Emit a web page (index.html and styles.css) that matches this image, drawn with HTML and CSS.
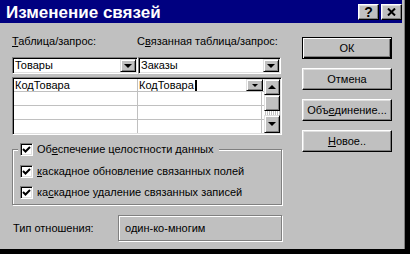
FILE: index.html
```html
<!DOCTYPE html>
<html lang="ru">
<head>
    <meta charset="UTF-8">
    <title>Изменение связей</title>
    <link rel="stylesheet" href="styles.css">
</head>
<body>
<div class="window">
    <div class="titlebar">
        <span class="title">Изменение связей</span>
        <div class="title-buttons">
            <button class="tbtn">?</button>
            <button class="tbtn">
                <svg width="9" height="8" viewBox="0 0 9 8"><path d="M1 0.5 L8 7.5 M8 0.5 L1 7.5" stroke="#000" stroke-width="2"/></svg>
            </button>
        </div>
    </div>

    <div class="content">
        <div class="main">
            <div class="labels">
                <span class="label-left"><u>Т</u>аблица/запрос:</span>
                <span>С<u>в</u>язанная таблица/запрос:</span>
            </div>

            <div class="combos">
                <div class="combo combo-left">
                    <span class="combo-text">Товары</span>
                    <span class="drop"><i class="arrow-down"></i></span>
                </div>
                <div class="combo combo-right">
                    <span class="combo-text">Заказы</span>
                    <span class="drop"><i class="arrow-down"></i></span>
                </div>
            </div>

            <div class="grid">
                <div class="cells">
                    <div class="row">
                        <div class="cell">КодТовара</div>
                        <div class="cell cell-active">КодТовара<span class="caret"></span><span class="cell-drop"><i class="arrow-down small"></i></span></div>
                    </div>
                    <div class="row"><div class="cell"></div><div class="cell"></div></div>
                    <div class="row"><div class="cell"></div><div class="cell"></div></div>
                    <div class="row"><div class="cell"></div><div class="cell"></div></div>
                </div>
                <div class="scrollbar">
                    <div class="sb-btn"><i class="arrow-up"></i></div>
                    <div class="sb-thumb"></div>
                    <div class="sb-track"></div>
                    <div class="sb-btn sb-down"><i class="arrow-down"></i></div>
                </div>
            </div>

            <fieldset class="group">
                <legend>
                    <span class="check">
                        <span class="box"><svg width="9" height="9" viewBox="0 0 9 9"><path d="M1 4 L3.5 6.5 L8 2" fill="none" stroke="#000" stroke-width="2"/></svg></span>
                        <span>Об<u>е</u>спечение целостности данных</span>
                    </span>
                </legend>
                <div class="checks">
                    <span class="check">
                        <span class="box"><svg width="9" height="9" viewBox="0 0 9 9"><path d="M1 4 L3.5 6.5 L8 2" fill="none" stroke="#000" stroke-width="2"/></svg></span>
                        <span><u>к</u>аскадное обновление связанных полей</span>
                    </span>
                    <span class="check">
                        <span class="box"><svg width="9" height="9" viewBox="0 0 9 9"><path d="M1 4 L3.5 6.5 L8 2" fill="none" stroke="#000" stroke-width="2"/></svg></span>
                        <span>ка<u>с</u>кадное удаление связанных записей</span>
                    </span>
                </div>
            </fieldset>

            <div class="relation">
                <span>Тип отношения:</span>
                <div class="relation-box">один-ко-многим</div>
            </div>
        </div>

        <div class="actions">
            <button class="btn btn-default">ОК</button>
            <button class="btn">Отмена</button>
            <button class="btn">Объ<u>е</u>динение...</button>
            <button class="btn"><u>Н</u>овое..</button>
        </div>
    </div>
</div>
</body>
</html>
```

FILE: styles.css
```css
* {
    box-sizing: border-box;
}

body {
    margin: 0;
    background: #000;
    font-family: "Liberation Sans", Arial, sans-serif;
    font-size: 11px;
    color: #000;
}

.window {
    width: 405px;
    height: 249px;
    background: #c0c0c0;
    padding-right: 2px;
    border-right: 1px solid #808080;
    overflow: hidden;
}

/* title bar */
.titlebar {
    height: 23px;
    display: flex;
    background: #000080;
    color: #fff;
    padding-left: 6px;
}

.title {
    font-size: 17px;
    font-weight: bold;
    line-height: 23px;
    padding-top: 1px;
}

.title-buttons {
    display: flex;
    gap: 2px;
    margin-left: auto;
    margin-top: 4px;
    height: 16px;
}

.tbtn {
    width: 21px;
    height: 16px;
    padding: 0;
    background: #c0c0c0;
    border: 1px solid;
    border-color: #fff #000 #000 #fff;
    box-shadow: inset -1px -1px #808080, inset 1px 1px #dfdfdf;
    display: flex;
    align-items: center;
    justify-content: center;
    font-family: "Liberation Sans", Arial, sans-serif;
    font-size: 14px;
    font-weight: bold;
    line-height: 1;
    color: #000;
}

/* dialog body */
.content {
    display: flex;
    padding: 12px 0 0 12px;
}

.main {
    width: 270px;
}

.labels {
    display: flex;
    line-height: 13px;
    height: 13px;
}

.label-left {
    width: 125px;
}

.combos {
    display: flex;
    margin-top: 9px;
}

.combo {
    height: 17px;
    display: flex;
    background: #fff;
    border: 1px solid;
    border-color: #808080 #fff #fff #808080;
    box-shadow: inset 1px 1px #000, inset -1px -1px #dfdfdf;
    padding: 1px;
}

.combo-left {
    width: 126px;
}

.combo-right {
    width: 143px;
}

.combo-text {
    flex: 1;
    line-height: 13px;
    padding-left: 1px;
}

.drop,
.cell-drop,
.sb-btn,
.sb-thumb {
    background: #c0c0c0;
    border: 1px solid;
    border-color: #dfdfdf #000 #000 #dfdfdf;
    box-shadow: inset 1px 1px #fff, inset -1px -1px #808080;
    display: flex;
    align-items: center;
    justify-content: center;
}

.drop {
    width: 16px;
    height: 13px;
}

.arrow-down,
.arrow-up {
    width: 0;
    height: 0;
    border-left: 4px solid transparent;
    border-right: 4px solid transparent;
}

.arrow-down {
    border-top: 4px solid #000;
}

.arrow-up {
    border-bottom: 4px solid #000;
}

.arrow-down.small {
    border-left-width: 3px;
    border-right-width: 3px;
    border-top-width: 3px;
}

/* field grid */
.grid {
    margin-top: 3px;
    width: 270px;
    display: flex;
    background: #fff;
    border: 1px solid;
    border-color: #808080 #fff #fff #808080;
    box-shadow: inset 1px 1px #000, inset -1px -1px #dfdfdf;
    padding: 1px;
}

.cells {
    flex: 1;
}

.row {
    display: flex;
    height: 14px;
    border-bottom: 1px solid #c0c0c0;
}

.row:first-child {
    height: 13px;
}

.row:last-child {
    height: 13px;
    border-bottom: none;
}

.cell {
    width: 124px;
    border-right: 1px solid #c0c0c0;
    line-height: 12px;
    padding-left: 1px;
}

.cell-active {
    flex: 1;
    display: flex;
    align-items: center;
    border-right: none;
}

.caret {
    width: 2px;
    height: 11px;
    background: #000;
    margin-left: 1px;
}

.cell-drop {
    width: 17px;
    height: 12px;
    margin-left: auto;
    margin-right: 1px;
}

.scrollbar {
    width: 16px;
    display: flex;
    flex-direction: column;
}

.sb-btn {
    height: 16px;
}

.sb-down {
    height: 18px;
}

.sb-thumb {
    height: 16px;
}

.sb-track {
    flex: 1;
    background: repeating-linear-gradient(90deg, #fff 0 1px, #c0c0c0 1px 2px);
}

/* checkbox group */
.group {
    margin: 8px 0 0;
    width: 270px;
    min-width: 0;
    padding: 0 0 5px 5px;
    border: 1px solid #808080;
    box-shadow: inset 1px 1px #fff, 1px 1px #fff;
}

.group legend {
    padding: 0 6px 0 2px;
    background: #c0c0c0;
    line-height: 13px;
}

.checks {
    display: flex;
    flex-direction: column;
    gap: 8px;
    padding: 9px 0 0 2px;
}

.check {
    display: flex;
    align-items: center;
    gap: 4px;
    height: 13px;
    line-height: 13px;
}

.box {
    width: 13px;
    height: 13px;
    background: #fff;
    border: 1px solid;
    border-color: #808080 #fff #fff #808080;
    box-shadow: inset 1px 1px #000, inset -1px -1px #dfdfdf;
    display: flex;
    align-items: center;
    justify-content: center;
}

/* relation type */
.relation {
    display: flex;
    align-items: center;
    justify-content: space-between;
    margin-top: 10px;
    padding-left: 1px;
}

.relation-box {
    width: 164px;
    height: 26px;
    display: flex;
    align-items: center;
    padding-left: 6px;
    border: 1px solid #808080;
    box-shadow: inset 1px 1px #fff, 1px 1px #fff;
}

/* buttons */
.actions {
    display: flex;
    flex-direction: column;
    gap: 9px;
    margin-left: 20px;
    margin-top: 2px;
}

.btn {
    width: 90px;
    height: 22px;
    padding: 0;
    background: #c0c0c0;
    font: inherit;
    color: #000;
    border: 1px solid;
    border-color: #fff #000 #000 #fff;
    box-shadow: inset -1px -1px #808080, inset 1px 1px #dfdfdf;
}

.btn-default {
    border-color: #000;
    box-shadow: inset 1px 1px #fff, inset -1px -1px #000, inset -2px -2px #808080;
}
```
